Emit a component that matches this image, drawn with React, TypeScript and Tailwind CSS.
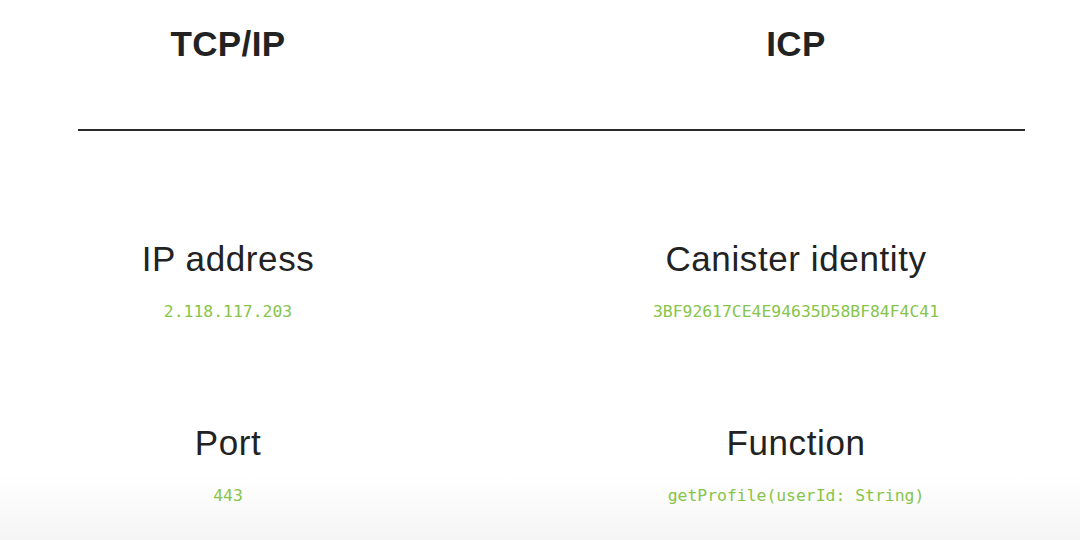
import React from "react";

const sans = { fontFamily: '"Liberation Sans", Arial, sans-serif' };

function Cell({ title, value }: { title: string; value: string }) {
  return (
    <div className="flex flex-col items-center">
      <div className="text-[35px] leading-[40px] text-[#222222] tracking-[0.6px]">{title}</div>
      <div className="mt-[23px] font-['DejaVu_Sans_Mono',monospace] text-[16.4px] leading-[20px] text-[#86c44a]">
        {value}
      </div>
    </div>
  );
}

export default function App() {
  return (
    <div
      className="w-[1080px] h-[540px] overflow-hidden bg-[linear-gradient(to_bottom,#ffffff_0px,#ffffff_475px,#f5f5f5_540px)] flex flex-col"
      style={sans}
    >
      <div className="grid grid-cols-2 gap-x-[112px] pr-[56px] pt-[24px]">
        <div className="text-center text-[35px] leading-[40px] font-bold text-[#222222] tracking-[0.4px]">TCP/IP</div>
        <div className="text-center text-[35px] leading-[40px] font-bold text-[#222222] tracking-[0.4px]">ICP</div>
      </div>
      <div className="ml-[78px] w-[947px] h-[2px] bg-[#2a2a2a] mt-[65px]" />
      <div className="grid grid-cols-2 gap-x-[112px] pr-[56px] pt-[108px] gap-y-[101px]">
        <Cell title="IP address" value="2.118.117.203" />
        <Cell title="Canister identity" value="3BF92617CE4E94635D58BF84F4C41" />
        <Cell title="Port" value="443" />
        <Cell title="Function" value="getProfile(userId: String)" />
      </div>
    </div>
  );
}
